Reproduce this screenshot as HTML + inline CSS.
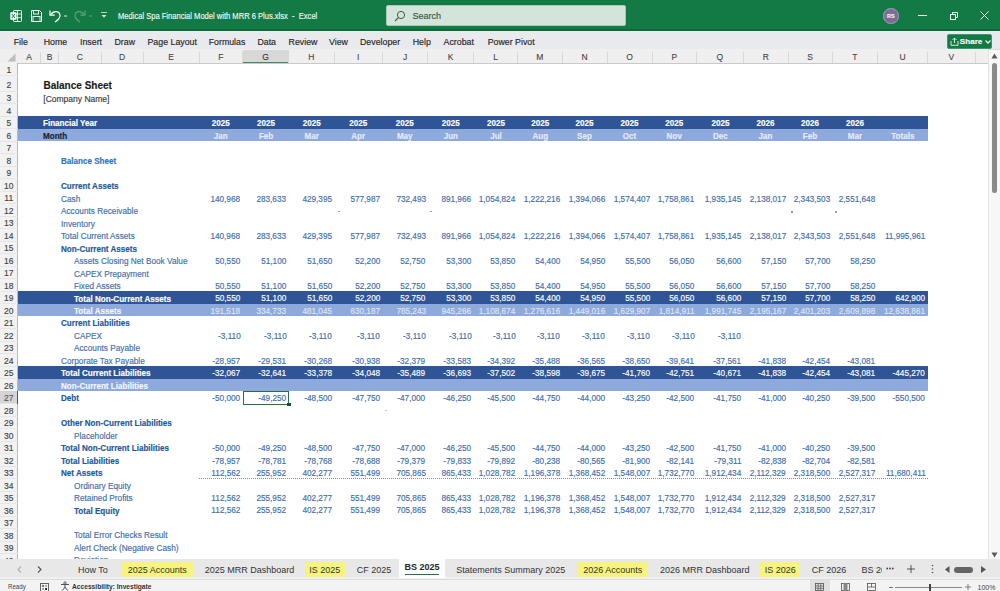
<!DOCTYPE html>
<html><head><meta charset="utf-8">
<style>
*{margin:0;padding:0;box-sizing:border-box}
html,body{width:1000px;height:591px;overflow:hidden;background:#fff;font-family:"Liberation Sans",sans-serif}
.abs{position:absolute}
.t{position:absolute;white-space:nowrap;-webkit-text-stroke:0.15px currentColor}
.b{position:absolute}
#title{position:absolute;left:0;top:0;width:1000px;height:31px;background:#147a45;border-bottom:2px solid #0e6b39}
#ribbon{position:absolute;left:0;top:31px;width:1000px;height:18.5px;background:#e9eaee;border-bottom:1px solid #dcdcdc}
.rt{position:absolute;top:35.7px;font-size:8.8px;color:#262626;line-height:12px;white-space:nowrap;-webkit-text-stroke:0.15px currentColor}
#colhdr{position:absolute;left:0;top:49px;width:988px;height:14.5px;background:#efefef;border-bottom:1px solid #c9c9c9}
.ch{position:absolute;top:50px;height:13px;font-size:8.5px;text-align:center;line-height:15px;-webkit-text-stroke:0.1px currentColor}
.cs{position:absolute;top:52px;height:11px;width:1px;background:#d8d8d8}
.rh{position:absolute;left:0;width:17.5px;font-size:8.5px;text-align:center;-webkit-text-stroke:0.15px currentColor}
.rs{position:absolute;left:0;width:17.5px;height:1px;background:#e6e6e6}
#rowhdr{position:absolute;left:0;top:63px;width:17.5px;height:496px;background:#f2f2f2;border-right:1px solid #b8b8b8}
#vscroll{position:absolute;left:988px;top:50px;width:12px;height:509px;background:#f7f7f7;border-left:1px solid #e3e3e3}
#tabbar{position:absolute;left:0;top:559px;width:1000px;height:20px;background:#e8e8e8;border-bottom:2px solid #f0f0f0}
.tab{position:absolute;top:560.5px;height:18px;font-size:9px;line-height:18px;color:#333;white-space:nowrap}
.ytab{background:#f6f47f;top:562px;height:14.5px;line-height:16.5px}
#status{position:absolute;left:0;top:579px;width:1000px;height:12px;background:#f3f3f3;border-top:1px solid #dcdcdc}
.st{position:absolute;font-size:7.5px;line-height:10px;color:#444;white-space:nowrap}
</style></head><body>
<div id="title"></div>
<!-- Excel icon -->
<svg class="abs" style="left:10px;top:9.5px" width="12" height="12" viewBox="0 0 12 12">
 <rect x="3.5" y="0.5" width="8" height="11" rx="0.8" fill="none" stroke="#fff" stroke-width="1"/>
 <line x1="7.5" y1="1" x2="7.5" y2="11" stroke="#fff" stroke-width="0.8"/>
 <line x1="4" y1="4" x2="11" y2="4" stroke="#fff" stroke-width="0.8"/>
 <line x1="4" y1="7.7" x2="11" y2="7.7" stroke="#fff" stroke-width="0.8"/>
 <rect x="0.3" y="2.3" width="6.2" height="7.4" rx="0.6" fill="#fff"/>
 <path d="M1.9 4 L4.9 8 M4.9 4 L1.9 8" stroke="#147a45" stroke-width="1"/>
</svg>
<!-- save icon -->
<svg class="abs" style="left:31px;top:9.5px" width="11" height="12" viewBox="0 0 11 12">
 <path d="M0.5 0.5 H8.5 L10.5 2.5 V11.5 H0.5 Z" fill="none" stroke="#fff" stroke-width="1"/>
 <rect x="2.5" y="0.5" width="5" height="3.5" fill="none" stroke="#fff" stroke-width="0.9"/>
 <rect x="2" y="6.5" width="7" height="5" fill="none" stroke="#fff" stroke-width="0.9"/>
</svg>
<!-- undo -->
<svg class="abs" style="left:49px;top:9px" width="22" height="14" viewBox="0 0 22 14">
 <path d="M2 5.5 C4 2 10 1 11 6 C11.5 9 9 11 6 13" fill="none" stroke="#fff" stroke-width="1.2"/>
 <path d="M1 1.5 V6.2 H5.7" fill="none" stroke="#fff" stroke-width="1.2"/>
 <line x1="15" y1="7" x2="18" y2="7" stroke="#e0efe6" stroke-width="1"/>
</svg>
<!-- redo faded -->
<svg class="abs" style="left:73px;top:9px" width="22" height="14" viewBox="0 0 22 14">
 <path d="M11 5.5 C9 2 3 1 2 6 C1.5 9 4 11 7 13" fill="none" stroke="#5aa37c" stroke-width="1.2"/>
 <path d="M12 1.5 V6.2 H7.3" fill="none" stroke="#5aa37c" stroke-width="1.2"/>
 <line x1="16" y1="7" x2="19" y2="7" stroke="#5aa37c" stroke-width="1"/>
</svg>
<svg class="abs" style="left:100px;top:11px" width="8" height="8" viewBox="0 0 8 8">
 <line x1="1" y1="1.5" x2="7" y2="1.5" stroke="#cfe6d8" stroke-width="0.9"/>
 <path d="M1.5 4 L4 6.8 L6.5 4 Z" fill="#cfe6d8"/>
</svg>
<div class="t" style="left:117.5px;top:10px;font-size:8.8px;line-height:12px;color:#f2f8f4;transform:scaleX(0.86);transform-origin:left center">Medical Spa Financial Model with MRR 6 Plus.xlsx&nbsp; -&nbsp; Excel</div>
<!-- search -->
<div class="abs" style="left:386px;top:5px;width:239.5px;height:21px;background:#d3e5da;border:1px solid #a9cbb6;border-radius:2px"></div>
<svg class="abs" style="left:394px;top:9.5px" width="12" height="12" viewBox="0 0 12 12">
 <circle cx="7" cy="5" r="3.6" fill="none" stroke="#3d5d49" stroke-width="1"/>
 <line x1="4.4" y1="7.6" x2="1" y2="11" stroke="#3d5d49" stroke-width="1.1"/>
</svg>
<div class="t" style="left:412.5px;top:9.5px;font-size:9px;line-height:12px;color:#3a5444">Search</div>
<!-- avatar -->
<div class="abs" style="left:883px;top:8px;width:15.5px;height:15.5px;border-radius:50%;background:#7b6e96;border:1.2px solid #a59bb8"></div>
<div class="t" style="left:883px;top:11px;width:15.5px;text-align:center;font-size:5.5px;line-height:10px;color:#f0eef5;font-weight:bold">RS</div>
<!-- window controls -->
<div class="abs" style="left:918px;top:15px;width:9px;height:1px;background:#e8f3ec"></div>
<svg class="abs" style="left:950px;top:11.5px" width="8" height="8" viewBox="0 0 8 8">
 <rect x="0.5" y="2.5" width="5" height="5" fill="none" stroke="#e8f3ec" stroke-width="1"/>
 <path d="M2.5 2.5 V0.5 H7.5 V5.5 H5.5" fill="none" stroke="#e8f3ec" stroke-width="1"/>
</svg>
<svg class="abs" style="left:980px;top:11px" width="9" height="9" viewBox="0 0 9 9">
 <path d="M0.5 0.5 L8.5 8.5 M8.5 0.5 L0.5 8.5" stroke="#e8f3ec" stroke-width="1"/>
</svg>

<div id="ribbon"></div>
<div class="rt" style="left:13.7px">File</div>
<div class="rt" style="left:43.7px">Home</div>
<div class="rt" style="left:80px">Insert</div>
<div class="rt" style="left:114.5px">Draw</div>
<div class="rt" style="left:147.5px">Page Layout</div>
<div class="rt" style="left:208.7px">Formulas</div>
<div class="rt" style="left:257.4px">Data</div>
<div class="rt" style="left:288.6px">Review</div>
<div class="rt" style="left:329px">View</div>
<div class="rt" style="left:360px">Developer</div>
<div class="rt" style="left:412.7px">Help</div>
<div class="rt" style="left:443.6px">Acrobat</div>
<div class="rt" style="left:487.7px">Power Pivot</div>
<!-- share -->
<div class="abs" style="left:946.5px;top:33.5px;width:45.7px;height:15px;background:#137a45;border-radius:2px;border:1px solid #3d9a68"></div>
<svg class="abs" style="left:949.5px;top:36.5px" width="9" height="9" viewBox="0 0 9 9">
 <path d="M1 4 V8.3 H8 V4" fill="none" stroke="#e6f2ea" stroke-width="0.9"/>
 <path d="M4.5 6 V1 M2.5 3 L4.5 1 L6.5 3" fill="none" stroke="#e6f2ea" stroke-width="0.9"/>
</svg>
<div class="t" style="left:959.8px;top:36px;font-size:8.1px;line-height:11px;color:#f4fbf6;font-weight:bold">Share</div>
<svg class="abs" style="left:984.5px;top:39.5px" width="6" height="4" viewBox="0 0 6 4"><path d="M0.5 0.5 L3 3 L5.5 0.5" fill="none" stroke="#e6f2ea" stroke-width="1.3"/></svg>

<div id="colhdr"></div>
<div class="ch" style="left:17.5px;width:23.0px;color:#444"><span>A</span></div>
<div class="cs" style="left:40.0px"></div>
<div class="ch" style="left:40.5px;width:18.0px;color:#444"><span>B</span></div>
<div class="cs" style="left:58.0px"></div>
<div class="ch" style="left:58.5px;width:42.5px;color:#444"><span>C</span></div>
<div class="cs" style="left:100.5px"></div>
<div class="ch" style="left:101px;width:42px;color:#444"><span>D</span></div>
<div class="cs" style="left:142.5px"></div>
<div class="ch" style="left:143px;width:56px;color:#444"><span>E</span></div>
<div class="cs" style="left:198.5px"></div>
<div class="ch" style="left:199px;width:43.5px;color:#444"><span>F</span></div>
<div class="cs" style="left:242.0px"></div>
<div class="ch" style="left:242.5px;width:46.19999999999999px;background:#d8d8d8;border-bottom:1.5px solid #3b8a5c;color:#333"><span>G</span></div>
<div class="cs" style="left:288.2px"></div>
<div class="ch" style="left:288.7px;width:45.30000000000001px;color:#444"><span>H</span></div>
<div class="cs" style="left:333.5px"></div>
<div class="ch" style="left:334px;width:48.30000000000001px;color:#444"><span>I</span></div>
<div class="cs" style="left:381.8px"></div>
<div class="ch" style="left:382.3px;width:45.5px;color:#444"><span>J</span></div>
<div class="cs" style="left:427.3px"></div>
<div class="ch" style="left:427.8px;width:45.69999999999999px;color:#444"><span>K</span></div>
<div class="cs" style="left:473.0px"></div>
<div class="ch" style="left:473.5px;width:44.0px;color:#444"><span>L</span></div>
<div class="cs" style="left:517.0px"></div>
<div class="ch" style="left:517.5px;width:44.5px;color:#444"><span>M</span></div>
<div class="cs" style="left:561.5px"></div>
<div class="ch" style="left:562px;width:45px;color:#444"><span>N</span></div>
<div class="cs" style="left:606.5px"></div>
<div class="ch" style="left:607px;width:45px;color:#444"><span>O</span></div>
<div class="cs" style="left:651.5px"></div>
<div class="ch" style="left:652px;width:44.5px;color:#444"><span>P</span></div>
<div class="cs" style="left:696.0px"></div>
<div class="ch" style="left:696.5px;width:46.799999999999955px;color:#444"><span>Q</span></div>
<div class="cs" style="left:742.8px"></div>
<div class="ch" style="left:743.3px;width:44.90000000000009px;color:#444"><span>R</span></div>
<div class="cs" style="left:787.7px"></div>
<div class="ch" style="left:788.2px;width:43.799999999999955px;color:#444"><span>S</span></div>
<div class="cs" style="left:831.5px"></div>
<div class="ch" style="left:832px;width:45.799999999999955px;color:#444"><span>T</span></div>
<div class="cs" style="left:877.3px"></div>
<div class="ch" style="left:877.8px;width:49.700000000000045px;color:#444"><span>U</span></div>
<div class="cs" style="left:927.0px"></div>
<div class="ch" style="left:927.5px;width:47.5px;color:#444"><span>V</span></div>
<div class="cs" style="left:974.5px"></div>
<div id="rowhdr"></div>
<svg class="abs" style="left:6px;top:53px" width="10" height="9" viewBox="0 0 10 9"><path d="M9.5 0.5 V8.5 H1.5 Z" fill="#bdbdbd"/></svg>
<div class="rh" style="top:63px;height:12.5px;line-height:15.1px;color:#444">1</div>
<div class="rs" style="top:75.0px"></div>
<div class="rh" style="top:75.5px;height:15.5px;line-height:18.1px;color:#444">2</div>
<div class="rs" style="top:90.5px"></div>
<div class="rh" style="top:91px;height:12.5px;line-height:15.1px;color:#444">3</div>
<div class="rs" style="top:103.0px"></div>
<div class="rh" style="top:103.5px;height:12.5px;line-height:15.1px;color:#444">4</div>
<div class="rs" style="top:115.5px"></div>
<div class="rh" style="top:116.0px;height:12.5px;line-height:15.1px;color:#444">5</div>
<div class="rs" style="top:128.0px"></div>
<div class="rh" style="top:128.5px;height:12.5px;line-height:15.1px;color:#444">6</div>
<div class="rs" style="top:140.5px"></div>
<div class="rh" style="top:141.0px;height:12.5px;line-height:15.1px;color:#444">7</div>
<div class="rs" style="top:153.0px"></div>
<div class="rh" style="top:153.5px;height:12.5px;line-height:15.1px;color:#444">8</div>
<div class="rs" style="top:165.5px"></div>
<div class="rh" style="top:166.0px;height:12.5px;line-height:15.1px;color:#444">9</div>
<div class="rs" style="top:178.0px"></div>
<div class="rh" style="top:178.5px;height:12.5px;line-height:15.1px;color:#444">10</div>
<div class="rs" style="top:190.5px"></div>
<div class="rh" style="top:191.0px;height:12.5px;line-height:15.1px;color:#444">11</div>
<div class="rs" style="top:203.0px"></div>
<div class="rh" style="top:203.5px;height:12.5px;line-height:15.1px;color:#444">12</div>
<div class="rs" style="top:215.5px"></div>
<div class="rh" style="top:216.0px;height:12.5px;line-height:15.1px;color:#444">13</div>
<div class="rs" style="top:228.0px"></div>
<div class="rh" style="top:228.5px;height:12.5px;line-height:15.1px;color:#444">14</div>
<div class="rs" style="top:240.5px"></div>
<div class="rh" style="top:241.0px;height:12.5px;line-height:15.1px;color:#444">15</div>
<div class="rs" style="top:253.0px"></div>
<div class="rh" style="top:253.5px;height:12.5px;line-height:15.1px;color:#444">16</div>
<div class="rs" style="top:265.5px"></div>
<div class="rh" style="top:266.0px;height:12.5px;line-height:15.1px;color:#444">17</div>
<div class="rs" style="top:278.0px"></div>
<div class="rh" style="top:278.5px;height:12.5px;line-height:15.1px;color:#444">18</div>
<div class="rs" style="top:290.5px"></div>
<div class="rh" style="top:291.0px;height:12.5px;line-height:15.1px;color:#444">19</div>
<div class="rs" style="top:303.0px"></div>
<div class="rh" style="top:303.5px;height:12.5px;line-height:15.1px;color:#444">20</div>
<div class="rs" style="top:315.5px"></div>
<div class="rh" style="top:316.0px;height:12.5px;line-height:15.1px;color:#444">21</div>
<div class="rs" style="top:328.0px"></div>
<div class="rh" style="top:328.5px;height:12.5px;line-height:15.1px;color:#444">22</div>
<div class="rs" style="top:340.5px"></div>
<div class="rh" style="top:341.0px;height:12.5px;line-height:15.1px;color:#444">23</div>
<div class="rs" style="top:353.0px"></div>
<div class="rh" style="top:353.5px;height:12.5px;line-height:15.1px;color:#444">24</div>
<div class="rs" style="top:365.5px"></div>
<div class="rh" style="top:366.0px;height:12.5px;line-height:15.1px;color:#444">25</div>
<div class="rs" style="top:378.0px"></div>
<div class="rh" style="top:378.5px;height:12.5px;line-height:15.1px;color:#444">26</div>
<div class="rs" style="top:390.5px"></div>
<div class="rh" style="top:391.0px;height:12.5px;line-height:15.1px;background:#d4d4d4;color:#555">27</div>
<div class="rs" style="top:403.0px"></div>
<div class="b" style="left:16.5px;top:391.0px;width:1.5px;height:12.5px;background:#217346"></div>
<div class="rh" style="top:403.5px;height:12.5px;line-height:15.1px;color:#444">28</div>
<div class="rs" style="top:415.5px"></div>
<div class="rh" style="top:416.0px;height:12.5px;line-height:15.1px;color:#444">29</div>
<div class="rs" style="top:428.0px"></div>
<div class="rh" style="top:428.5px;height:12.5px;line-height:15.1px;color:#444">30</div>
<div class="rs" style="top:440.5px"></div>
<div class="rh" style="top:441.0px;height:12.5px;line-height:15.1px;color:#444">31</div>
<div class="rs" style="top:453.0px"></div>
<div class="rh" style="top:453.5px;height:12.5px;line-height:15.1px;color:#444">32</div>
<div class="rs" style="top:465.5px"></div>
<div class="rh" style="top:466.0px;height:12.5px;line-height:15.1px;color:#444">33</div>
<div class="rs" style="top:478.0px"></div>
<div class="rh" style="top:478.5px;height:12.5px;line-height:15.1px;color:#444">34</div>
<div class="rs" style="top:490.5px"></div>
<div class="rh" style="top:491.0px;height:12.5px;line-height:15.1px;color:#444">35</div>
<div class="rs" style="top:503.0px"></div>
<div class="rh" style="top:503.5px;height:12.5px;line-height:15.1px;color:#444">36</div>
<div class="rs" style="top:515.5px"></div>
<div class="rh" style="top:516.0px;height:12.5px;line-height:15.1px;color:#444">37</div>
<div class="rs" style="top:528.0px"></div>
<div class="rh" style="top:528.5px;height:12.5px;line-height:15.1px;color:#444">38</div>
<div class="rs" style="top:540.5px"></div>
<div class="rh" style="top:541.0px;height:12.5px;line-height:15.1px;color:#444">39</div>
<div class="rs" style="top:553.0px"></div>
<div class="rh" style="top:553.5px;height:12.5px;line-height:15.1px;color:#444">40</div>
<div class="rs" style="top:565.5px"></div>

<div class="b" style="left:17.5px;width:910px;top:116.0px;height:12.5px;background:#2f5597"></div>
<div class="b" style="left:17.5px;width:910px;top:291.0px;height:12.5px;background:#2f5597"></div>
<div class="b" style="left:17.5px;width:910px;top:366.0px;height:12.5px;background:#2f5597"></div>
<div class="b" style="left:17.5px;width:910px;top:128.5px;height:12.5px;background:#8ea9db"></div>
<div class="b" style="left:17.5px;width:910px;top:303.5px;height:12.5px;background:#8ea9db"></div>
<div class="b" style="left:17.5px;width:910px;top:378.5px;height:12.5px;background:#8ea9db"></div>
<div class="t" style="top:79.83px;font-size:10px;line-height:12.00px;color:#1b1b1b;font-weight:bold;left:43.50px;">Balance Sheet</div>
<div class="t" style="top:93.75px;font-size:8.5px;line-height:10.20px;color:#3a3a3a;left:43.30px;">[Company Name]</div>
<div class="t" style="top:118.13px;font-size:8.5px;line-height:10.20px;color:#ffffff;font-weight:bold;transform:scaleX(0.95);transform-origin:left center;left:43.30px;">Financial Year</div>
<div class="t" style="top:131.40px;font-size:8.5px;line-height:10.20px;color:#1a1f33;font-weight:bold;transform:scaleX(0.95);transform-origin:left center;left:43.30px;">Month</div>
<div class="t" style="top:118.13px;font-size:8.5px;line-height:10.20px;color:#ffffff;font-weight:bold;transform:scaleX(0.95);transform-origin:center center;left:199.00px;width:43.50px;text-align:center;">2025</div>
<div class="t" style="top:118.13px;font-size:8.5px;line-height:10.20px;color:#ffffff;font-weight:bold;transform:scaleX(0.95);transform-origin:center center;left:242.50px;width:46.20px;text-align:center;">2025</div>
<div class="t" style="top:118.13px;font-size:8.5px;line-height:10.20px;color:#ffffff;font-weight:bold;transform:scaleX(0.95);transform-origin:center center;left:288.70px;width:45.30px;text-align:center;">2025</div>
<div class="t" style="top:118.13px;font-size:8.5px;line-height:10.20px;color:#ffffff;font-weight:bold;transform:scaleX(0.95);transform-origin:center center;left:334.00px;width:48.30px;text-align:center;">2025</div>
<div class="t" style="top:118.13px;font-size:8.5px;line-height:10.20px;color:#ffffff;font-weight:bold;transform:scaleX(0.95);transform-origin:center center;left:382.30px;width:45.50px;text-align:center;">2025</div>
<div class="t" style="top:118.13px;font-size:8.5px;line-height:10.20px;color:#ffffff;font-weight:bold;transform:scaleX(0.95);transform-origin:center center;left:427.80px;width:45.70px;text-align:center;">2025</div>
<div class="t" style="top:118.13px;font-size:8.5px;line-height:10.20px;color:#ffffff;font-weight:bold;transform:scaleX(0.95);transform-origin:center center;left:473.50px;width:44.00px;text-align:center;">2025</div>
<div class="t" style="top:118.13px;font-size:8.5px;line-height:10.20px;color:#ffffff;font-weight:bold;transform:scaleX(0.95);transform-origin:center center;left:517.50px;width:44.50px;text-align:center;">2025</div>
<div class="t" style="top:118.13px;font-size:8.5px;line-height:10.20px;color:#ffffff;font-weight:bold;transform:scaleX(0.95);transform-origin:center center;left:562.00px;width:45.00px;text-align:center;">2025</div>
<div class="t" style="top:118.13px;font-size:8.5px;line-height:10.20px;color:#ffffff;font-weight:bold;transform:scaleX(0.95);transform-origin:center center;left:607.00px;width:45.00px;text-align:center;">2025</div>
<div class="t" style="top:118.13px;font-size:8.5px;line-height:10.20px;color:#ffffff;font-weight:bold;transform:scaleX(0.95);transform-origin:center center;left:652.00px;width:44.50px;text-align:center;">2025</div>
<div class="t" style="top:118.13px;font-size:8.5px;line-height:10.20px;color:#ffffff;font-weight:bold;transform:scaleX(0.95);transform-origin:center center;left:696.50px;width:46.80px;text-align:center;">2025</div>
<div class="t" style="top:118.13px;font-size:8.5px;line-height:10.20px;color:#ffffff;font-weight:bold;transform:scaleX(0.95);transform-origin:center center;left:743.30px;width:44.90px;text-align:center;">2026</div>
<div class="t" style="top:118.13px;font-size:8.5px;line-height:10.20px;color:#ffffff;font-weight:bold;transform:scaleX(0.95);transform-origin:center center;left:788.20px;width:43.80px;text-align:center;">2026</div>
<div class="t" style="top:118.13px;font-size:8.5px;line-height:10.20px;color:#ffffff;font-weight:bold;transform:scaleX(0.95);transform-origin:center center;left:832.00px;width:45.80px;text-align:center;">2026</div>
<div class="t" style="top:131.40px;font-size:8.5px;line-height:10.20px;color:#e4ecf8;font-weight:bold;transform:scaleX(0.95);transform-origin:center center;left:199.00px;width:43.50px;text-align:center;">Jan</div>
<div class="t" style="top:131.40px;font-size:8.5px;line-height:10.20px;color:#e4ecf8;font-weight:bold;transform:scaleX(0.95);transform-origin:center center;left:242.50px;width:46.20px;text-align:center;">Feb</div>
<div class="t" style="top:131.40px;font-size:8.5px;line-height:10.20px;color:#e4ecf8;font-weight:bold;transform:scaleX(0.95);transform-origin:center center;left:288.70px;width:45.30px;text-align:center;">Mar</div>
<div class="t" style="top:131.40px;font-size:8.5px;line-height:10.20px;color:#e4ecf8;font-weight:bold;transform:scaleX(0.95);transform-origin:center center;left:334.00px;width:48.30px;text-align:center;">Apr</div>
<div class="t" style="top:131.40px;font-size:8.5px;line-height:10.20px;color:#e4ecf8;font-weight:bold;transform:scaleX(0.95);transform-origin:center center;left:382.30px;width:45.50px;text-align:center;">May</div>
<div class="t" style="top:131.40px;font-size:8.5px;line-height:10.20px;color:#e4ecf8;font-weight:bold;transform:scaleX(0.95);transform-origin:center center;left:427.80px;width:45.70px;text-align:center;">Jun</div>
<div class="t" style="top:131.40px;font-size:8.5px;line-height:10.20px;color:#e4ecf8;font-weight:bold;transform:scaleX(0.95);transform-origin:center center;left:473.50px;width:44.00px;text-align:center;">Jul</div>
<div class="t" style="top:131.40px;font-size:8.5px;line-height:10.20px;color:#e4ecf8;font-weight:bold;transform:scaleX(0.95);transform-origin:center center;left:517.50px;width:44.50px;text-align:center;">Aug</div>
<div class="t" style="top:131.40px;font-size:8.5px;line-height:10.20px;color:#e4ecf8;font-weight:bold;transform:scaleX(0.95);transform-origin:center center;left:562.00px;width:45.00px;text-align:center;">Sep</div>
<div class="t" style="top:131.40px;font-size:8.5px;line-height:10.20px;color:#e4ecf8;font-weight:bold;transform:scaleX(0.95);transform-origin:center center;left:607.00px;width:45.00px;text-align:center;">Oct</div>
<div class="t" style="top:131.40px;font-size:8.5px;line-height:10.20px;color:#e4ecf8;font-weight:bold;transform:scaleX(0.95);transform-origin:center center;left:652.00px;width:44.50px;text-align:center;">Nov</div>
<div class="t" style="top:131.40px;font-size:8.5px;line-height:10.20px;color:#e4ecf8;font-weight:bold;transform:scaleX(0.95);transform-origin:center center;left:696.50px;width:46.80px;text-align:center;">Dec</div>
<div class="t" style="top:131.40px;font-size:8.5px;line-height:10.20px;color:#e4ecf8;font-weight:bold;transform:scaleX(0.95);transform-origin:center center;left:743.30px;width:44.90px;text-align:center;">Jan</div>
<div class="t" style="top:131.40px;font-size:8.5px;line-height:10.20px;color:#e4ecf8;font-weight:bold;transform:scaleX(0.95);transform-origin:center center;left:788.20px;width:43.80px;text-align:center;">Feb</div>
<div class="t" style="top:131.40px;font-size:8.5px;line-height:10.20px;color:#e4ecf8;font-weight:bold;transform:scaleX(0.95);transform-origin:center center;left:832.00px;width:45.80px;text-align:center;">Mar</div>
<div class="t" style="top:131.40px;font-size:8.5px;line-height:10.20px;color:#e4ecf8;font-weight:bold;transform:scaleX(0.95);transform-origin:center center;left:877.80px;width:49.70px;text-align:center;">Totals</div>
<div class="t" style="top:156.34px;font-size:8.5px;line-height:10.20px;color:#2e74c0;font-weight:bold;transform:scaleX(0.95);transform-origin:left center;left:61.20px;">Balance Sheet</div>
<div class="t" style="top:181.28px;font-size:8.5px;line-height:10.20px;color:#22589a;font-weight:bold;transform:scaleX(0.95);transform-origin:left center;left:61.20px;">Current Assets</div>
<div class="t" style="top:193.75px;font-size:8.5px;line-height:10.20px;color:#3d6eab;transform:scaleX(0.97);transform-origin:left center;left:61.20px;">Cash</div>
<div class="t" style="top:193.66px;font-size:8.6px;line-height:10.32px;color:#3d6eab;transform:scaleX(0.955);transform-origin:right center;right:759.70px;text-align:right;">140,968</div>
<div class="t" style="top:193.66px;font-size:8.6px;line-height:10.32px;color:#3d6eab;transform:scaleX(0.955);transform-origin:right center;right:713.50px;text-align:right;">283,633</div>
<div class="t" style="top:193.66px;font-size:8.6px;line-height:10.32px;color:#3d6eab;transform:scaleX(0.955);transform-origin:right center;right:668.20px;text-align:right;">429,395</div>
<div class="t" style="top:193.66px;font-size:8.6px;line-height:10.32px;color:#3d6eab;transform:scaleX(0.955);transform-origin:right center;right:619.90px;text-align:right;">577,987</div>
<div class="t" style="top:193.66px;font-size:8.6px;line-height:10.32px;color:#3d6eab;transform:scaleX(0.955);transform-origin:right center;right:574.40px;text-align:right;">732,493</div>
<div class="t" style="top:193.66px;font-size:8.6px;line-height:10.32px;color:#3d6eab;transform:scaleX(0.955);transform-origin:right center;right:528.70px;text-align:right;">891,966</div>
<div class="t" style="top:193.66px;font-size:8.6px;line-height:10.32px;color:#3d6eab;transform:scaleX(0.955);transform-origin:right center;right:484.70px;text-align:right;">1,054,824</div>
<div class="t" style="top:193.66px;font-size:8.6px;line-height:10.32px;color:#3d6eab;transform:scaleX(0.955);transform-origin:right center;right:440.20px;text-align:right;">1,222,216</div>
<div class="t" style="top:193.66px;font-size:8.6px;line-height:10.32px;color:#3d6eab;transform:scaleX(0.955);transform-origin:right center;right:395.20px;text-align:right;">1,394,066</div>
<div class="t" style="top:193.66px;font-size:8.6px;line-height:10.32px;color:#3d6eab;transform:scaleX(0.955);transform-origin:right center;right:350.20px;text-align:right;">1,574,407</div>
<div class="t" style="top:193.66px;font-size:8.6px;line-height:10.32px;color:#3d6eab;transform:scaleX(0.955);transform-origin:right center;right:305.70px;text-align:right;">1,758,861</div>
<div class="t" style="top:193.66px;font-size:8.6px;line-height:10.32px;color:#3d6eab;transform:scaleX(0.955);transform-origin:right center;right:258.90px;text-align:right;">1,935,145</div>
<div class="t" style="top:193.66px;font-size:8.6px;line-height:10.32px;color:#3d6eab;transform:scaleX(0.955);transform-origin:right center;right:214.00px;text-align:right;">2,138,017</div>
<div class="t" style="top:193.66px;font-size:8.6px;line-height:10.32px;color:#3d6eab;transform:scaleX(0.955);transform-origin:right center;right:170.20px;text-align:right;">2,343,503</div>
<div class="t" style="top:193.66px;font-size:8.6px;line-height:10.32px;color:#3d6eab;transform:scaleX(0.955);transform-origin:right center;right:124.40px;text-align:right;">2,551,648</div>
<div class="t" style="top:206.22px;font-size:8.5px;line-height:10.20px;color:#3d6eab;transform:scaleX(0.97);transform-origin:left center;left:61.20px;">Accounts Receivable</div>
<div class="t" style="top:218.69px;font-size:8.5px;line-height:10.20px;color:#3d6eab;transform:scaleX(0.97);transform-origin:left center;left:61.20px;">Inventory</div>
<div class="t" style="top:231.16px;font-size:8.5px;line-height:10.20px;color:#3d6eab;transform:scaleX(0.97);transform-origin:left center;left:61.20px;">Total Current Assets</div>
<div class="t" style="top:231.07px;font-size:8.6px;line-height:10.32px;color:#3d6eab;transform:scaleX(0.955);transform-origin:right center;right:759.70px;text-align:right;">140,968</div>
<div class="t" style="top:231.07px;font-size:8.6px;line-height:10.32px;color:#3d6eab;transform:scaleX(0.955);transform-origin:right center;right:713.50px;text-align:right;">283,633</div>
<div class="t" style="top:231.07px;font-size:8.6px;line-height:10.32px;color:#3d6eab;transform:scaleX(0.955);transform-origin:right center;right:668.20px;text-align:right;">429,395</div>
<div class="t" style="top:231.07px;font-size:8.6px;line-height:10.32px;color:#3d6eab;transform:scaleX(0.955);transform-origin:right center;right:619.90px;text-align:right;">577,987</div>
<div class="t" style="top:231.07px;font-size:8.6px;line-height:10.32px;color:#3d6eab;transform:scaleX(0.955);transform-origin:right center;right:574.40px;text-align:right;">732,493</div>
<div class="t" style="top:231.07px;font-size:8.6px;line-height:10.32px;color:#3d6eab;transform:scaleX(0.955);transform-origin:right center;right:528.70px;text-align:right;">891,966</div>
<div class="t" style="top:231.07px;font-size:8.6px;line-height:10.32px;color:#3d6eab;transform:scaleX(0.955);transform-origin:right center;right:484.70px;text-align:right;">1,054,824</div>
<div class="t" style="top:231.07px;font-size:8.6px;line-height:10.32px;color:#3d6eab;transform:scaleX(0.955);transform-origin:right center;right:440.20px;text-align:right;">1,222,216</div>
<div class="t" style="top:231.07px;font-size:8.6px;line-height:10.32px;color:#3d6eab;transform:scaleX(0.955);transform-origin:right center;right:395.20px;text-align:right;">1,394,066</div>
<div class="t" style="top:231.07px;font-size:8.6px;line-height:10.32px;color:#3d6eab;transform:scaleX(0.955);transform-origin:right center;right:350.20px;text-align:right;">1,574,407</div>
<div class="t" style="top:231.07px;font-size:8.6px;line-height:10.32px;color:#3d6eab;transform:scaleX(0.955);transform-origin:right center;right:305.70px;text-align:right;">1,758,861</div>
<div class="t" style="top:231.07px;font-size:8.6px;line-height:10.32px;color:#3d6eab;transform:scaleX(0.955);transform-origin:right center;right:258.90px;text-align:right;">1,935,145</div>
<div class="t" style="top:231.07px;font-size:8.6px;line-height:10.32px;color:#3d6eab;transform:scaleX(0.955);transform-origin:right center;right:214.00px;text-align:right;">2,138,017</div>
<div class="t" style="top:231.07px;font-size:8.6px;line-height:10.32px;color:#3d6eab;transform:scaleX(0.955);transform-origin:right center;right:170.20px;text-align:right;">2,343,503</div>
<div class="t" style="top:231.07px;font-size:8.6px;line-height:10.32px;color:#3d6eab;transform:scaleX(0.955);transform-origin:right center;right:124.40px;text-align:right;">2,551,648</div>
<div class="t" style="top:231.07px;font-size:8.6px;line-height:10.32px;color:#3d6eab;transform:scaleX(0.955);transform-origin:right center;right:74.70px;text-align:right;">11,995,961</div>
<div class="t" style="top:243.63px;font-size:8.5px;line-height:10.20px;color:#22589a;font-weight:bold;transform:scaleX(0.95);transform-origin:left center;left:61.20px;">Non-Current Assets</div>
<div class="t" style="top:256.10px;font-size:8.5px;line-height:10.20px;color:#3d6eab;transform:scaleX(0.97);transform-origin:left center;left:73.50px;">Assets Closing Net Book Value</div>
<div class="t" style="top:256.01px;font-size:8.6px;line-height:10.32px;color:#3d6eab;transform:scaleX(0.955);transform-origin:right center;right:759.70px;text-align:right;">50,550</div>
<div class="t" style="top:256.01px;font-size:8.6px;line-height:10.32px;color:#3d6eab;transform:scaleX(0.955);transform-origin:right center;right:713.50px;text-align:right;">51,100</div>
<div class="t" style="top:256.01px;font-size:8.6px;line-height:10.32px;color:#3d6eab;transform:scaleX(0.955);transform-origin:right center;right:668.20px;text-align:right;">51,650</div>
<div class="t" style="top:256.01px;font-size:8.6px;line-height:10.32px;color:#3d6eab;transform:scaleX(0.955);transform-origin:right center;right:619.90px;text-align:right;">52,200</div>
<div class="t" style="top:256.01px;font-size:8.6px;line-height:10.32px;color:#3d6eab;transform:scaleX(0.955);transform-origin:right center;right:574.40px;text-align:right;">52,750</div>
<div class="t" style="top:256.01px;font-size:8.6px;line-height:10.32px;color:#3d6eab;transform:scaleX(0.955);transform-origin:right center;right:528.70px;text-align:right;">53,300</div>
<div class="t" style="top:256.01px;font-size:8.6px;line-height:10.32px;color:#3d6eab;transform:scaleX(0.955);transform-origin:right center;right:484.70px;text-align:right;">53,850</div>
<div class="t" style="top:256.01px;font-size:8.6px;line-height:10.32px;color:#3d6eab;transform:scaleX(0.955);transform-origin:right center;right:440.20px;text-align:right;">54,400</div>
<div class="t" style="top:256.01px;font-size:8.6px;line-height:10.32px;color:#3d6eab;transform:scaleX(0.955);transform-origin:right center;right:395.20px;text-align:right;">54,950</div>
<div class="t" style="top:256.01px;font-size:8.6px;line-height:10.32px;color:#3d6eab;transform:scaleX(0.955);transform-origin:right center;right:350.20px;text-align:right;">55,500</div>
<div class="t" style="top:256.01px;font-size:8.6px;line-height:10.32px;color:#3d6eab;transform:scaleX(0.955);transform-origin:right center;right:305.70px;text-align:right;">56,050</div>
<div class="t" style="top:256.01px;font-size:8.6px;line-height:10.32px;color:#3d6eab;transform:scaleX(0.955);transform-origin:right center;right:258.90px;text-align:right;">56,600</div>
<div class="t" style="top:256.01px;font-size:8.6px;line-height:10.32px;color:#3d6eab;transform:scaleX(0.955);transform-origin:right center;right:214.00px;text-align:right;">57,150</div>
<div class="t" style="top:256.01px;font-size:8.6px;line-height:10.32px;color:#3d6eab;transform:scaleX(0.955);transform-origin:right center;right:170.20px;text-align:right;">57,700</div>
<div class="t" style="top:256.01px;font-size:8.6px;line-height:10.32px;color:#3d6eab;transform:scaleX(0.955);transform-origin:right center;right:124.40px;text-align:right;">58,250</div>
<div class="t" style="top:268.57px;font-size:8.5px;line-height:10.20px;color:#3d6eab;transform:scaleX(0.97);transform-origin:left center;left:73.50px;">CAPEX Prepayment</div>
<div class="t" style="top:281.04px;font-size:8.5px;line-height:10.20px;color:#3d6eab;transform:scaleX(0.97);transform-origin:left center;left:73.50px;">Fixed Assets</div>
<div class="t" style="top:280.95px;font-size:8.6px;line-height:10.32px;color:#3d6eab;transform:scaleX(0.955);transform-origin:right center;right:759.70px;text-align:right;">50,550</div>
<div class="t" style="top:280.95px;font-size:8.6px;line-height:10.32px;color:#3d6eab;transform:scaleX(0.955);transform-origin:right center;right:713.50px;text-align:right;">51,100</div>
<div class="t" style="top:280.95px;font-size:8.6px;line-height:10.32px;color:#3d6eab;transform:scaleX(0.955);transform-origin:right center;right:668.20px;text-align:right;">51,650</div>
<div class="t" style="top:280.95px;font-size:8.6px;line-height:10.32px;color:#3d6eab;transform:scaleX(0.955);transform-origin:right center;right:619.90px;text-align:right;">52,200</div>
<div class="t" style="top:280.95px;font-size:8.6px;line-height:10.32px;color:#3d6eab;transform:scaleX(0.955);transform-origin:right center;right:574.40px;text-align:right;">52,750</div>
<div class="t" style="top:280.95px;font-size:8.6px;line-height:10.32px;color:#3d6eab;transform:scaleX(0.955);transform-origin:right center;right:528.70px;text-align:right;">53,300</div>
<div class="t" style="top:280.95px;font-size:8.6px;line-height:10.32px;color:#3d6eab;transform:scaleX(0.955);transform-origin:right center;right:484.70px;text-align:right;">53,850</div>
<div class="t" style="top:280.95px;font-size:8.6px;line-height:10.32px;color:#3d6eab;transform:scaleX(0.955);transform-origin:right center;right:440.20px;text-align:right;">54,400</div>
<div class="t" style="top:280.95px;font-size:8.6px;line-height:10.32px;color:#3d6eab;transform:scaleX(0.955);transform-origin:right center;right:395.20px;text-align:right;">54,950</div>
<div class="t" style="top:280.95px;font-size:8.6px;line-height:10.32px;color:#3d6eab;transform:scaleX(0.955);transform-origin:right center;right:350.20px;text-align:right;">55,500</div>
<div class="t" style="top:280.95px;font-size:8.6px;line-height:10.32px;color:#3d6eab;transform:scaleX(0.955);transform-origin:right center;right:305.70px;text-align:right;">56,050</div>
<div class="t" style="top:280.95px;font-size:8.6px;line-height:10.32px;color:#3d6eab;transform:scaleX(0.955);transform-origin:right center;right:258.90px;text-align:right;">56,600</div>
<div class="t" style="top:280.95px;font-size:8.6px;line-height:10.32px;color:#3d6eab;transform:scaleX(0.955);transform-origin:right center;right:214.00px;text-align:right;">57,150</div>
<div class="t" style="top:280.95px;font-size:8.6px;line-height:10.32px;color:#3d6eab;transform:scaleX(0.955);transform-origin:right center;right:170.20px;text-align:right;">57,700</div>
<div class="t" style="top:280.95px;font-size:8.6px;line-height:10.32px;color:#3d6eab;transform:scaleX(0.955);transform-origin:right center;right:124.40px;text-align:right;">58,250</div>
<div class="t" style="top:293.51px;font-size:8.5px;line-height:10.20px;color:#ffffff;font-weight:bold;transform:scaleX(0.95);transform-origin:left center;left:73.50px;">Total Non-Current Assets</div>
<div class="t" style="top:293.42px;font-size:8.6px;line-height:10.32px;color:#ffffff;transform:scaleX(0.955);transform-origin:right center;right:759.70px;text-align:right;">50,550</div>
<div class="t" style="top:293.42px;font-size:8.6px;line-height:10.32px;color:#ffffff;transform:scaleX(0.955);transform-origin:right center;right:713.50px;text-align:right;">51,100</div>
<div class="t" style="top:293.42px;font-size:8.6px;line-height:10.32px;color:#ffffff;transform:scaleX(0.955);transform-origin:right center;right:668.20px;text-align:right;">51,650</div>
<div class="t" style="top:293.42px;font-size:8.6px;line-height:10.32px;color:#ffffff;transform:scaleX(0.955);transform-origin:right center;right:619.90px;text-align:right;">52,200</div>
<div class="t" style="top:293.42px;font-size:8.6px;line-height:10.32px;color:#ffffff;transform:scaleX(0.955);transform-origin:right center;right:574.40px;text-align:right;">52,750</div>
<div class="t" style="top:293.42px;font-size:8.6px;line-height:10.32px;color:#ffffff;transform:scaleX(0.955);transform-origin:right center;right:528.70px;text-align:right;">53,300</div>
<div class="t" style="top:293.42px;font-size:8.6px;line-height:10.32px;color:#ffffff;transform:scaleX(0.955);transform-origin:right center;right:484.70px;text-align:right;">53,850</div>
<div class="t" style="top:293.42px;font-size:8.6px;line-height:10.32px;color:#ffffff;transform:scaleX(0.955);transform-origin:right center;right:440.20px;text-align:right;">54,400</div>
<div class="t" style="top:293.42px;font-size:8.6px;line-height:10.32px;color:#ffffff;transform:scaleX(0.955);transform-origin:right center;right:395.20px;text-align:right;">54,950</div>
<div class="t" style="top:293.42px;font-size:8.6px;line-height:10.32px;color:#ffffff;transform:scaleX(0.955);transform-origin:right center;right:350.20px;text-align:right;">55,500</div>
<div class="t" style="top:293.42px;font-size:8.6px;line-height:10.32px;color:#ffffff;transform:scaleX(0.955);transform-origin:right center;right:305.70px;text-align:right;">56,050</div>
<div class="t" style="top:293.42px;font-size:8.6px;line-height:10.32px;color:#ffffff;transform:scaleX(0.955);transform-origin:right center;right:258.90px;text-align:right;">56,600</div>
<div class="t" style="top:293.42px;font-size:8.6px;line-height:10.32px;color:#ffffff;transform:scaleX(0.955);transform-origin:right center;right:214.00px;text-align:right;">57,150</div>
<div class="t" style="top:293.42px;font-size:8.6px;line-height:10.32px;color:#ffffff;transform:scaleX(0.955);transform-origin:right center;right:170.20px;text-align:right;">57,700</div>
<div class="t" style="top:293.42px;font-size:8.6px;line-height:10.32px;color:#ffffff;transform:scaleX(0.955);transform-origin:right center;right:124.40px;text-align:right;">58,250</div>
<div class="t" style="top:293.42px;font-size:8.6px;line-height:10.32px;color:#ffffff;transform:scaleX(0.955);transform-origin:right center;right:74.70px;text-align:right;">642,900</div>
<div class="t" style="top:305.98px;font-size:8.5px;line-height:10.20px;color:#f4f7fc;font-weight:bold;transform:scaleX(0.95);transform-origin:left center;left:73.50px;">Total Assets</div>
<div class="t" style="top:305.89px;font-size:8.6px;line-height:10.32px;color:#dfe7f5;transform:scaleX(0.955);transform-origin:right center;right:759.70px;text-align:right;">191,518</div>
<div class="t" style="top:305.89px;font-size:8.6px;line-height:10.32px;color:#dfe7f5;transform:scaleX(0.955);transform-origin:right center;right:713.50px;text-align:right;">334,733</div>
<div class="t" style="top:305.89px;font-size:8.6px;line-height:10.32px;color:#dfe7f5;transform:scaleX(0.955);transform-origin:right center;right:668.20px;text-align:right;">481,045</div>
<div class="t" style="top:305.89px;font-size:8.6px;line-height:10.32px;color:#dfe7f5;transform:scaleX(0.955);transform-origin:right center;right:619.90px;text-align:right;">630,187</div>
<div class="t" style="top:305.89px;font-size:8.6px;line-height:10.32px;color:#dfe7f5;transform:scaleX(0.955);transform-origin:right center;right:574.40px;text-align:right;">785,243</div>
<div class="t" style="top:305.89px;font-size:8.6px;line-height:10.32px;color:#dfe7f5;transform:scaleX(0.955);transform-origin:right center;right:528.70px;text-align:right;">945,266</div>
<div class="t" style="top:305.89px;font-size:8.6px;line-height:10.32px;color:#dfe7f5;transform:scaleX(0.955);transform-origin:right center;right:484.70px;text-align:right;">1,108,674</div>
<div class="t" style="top:305.89px;font-size:8.6px;line-height:10.32px;color:#dfe7f5;transform:scaleX(0.955);transform-origin:right center;right:440.20px;text-align:right;">1,276,616</div>
<div class="t" style="top:305.89px;font-size:8.6px;line-height:10.32px;color:#dfe7f5;transform:scaleX(0.955);transform-origin:right center;right:395.20px;text-align:right;">1,449,016</div>
<div class="t" style="top:305.89px;font-size:8.6px;line-height:10.32px;color:#dfe7f5;transform:scaleX(0.955);transform-origin:right center;right:350.20px;text-align:right;">1,629,907</div>
<div class="t" style="top:305.89px;font-size:8.6px;line-height:10.32px;color:#dfe7f5;transform:scaleX(0.955);transform-origin:right center;right:305.70px;text-align:right;">1,814,911</div>
<div class="t" style="top:305.89px;font-size:8.6px;line-height:10.32px;color:#dfe7f5;transform:scaleX(0.955);transform-origin:right center;right:258.90px;text-align:right;">1,991,745</div>
<div class="t" style="top:305.89px;font-size:8.6px;line-height:10.32px;color:#dfe7f5;transform:scaleX(0.955);transform-origin:right center;right:214.00px;text-align:right;">2,195,167</div>
<div class="t" style="top:305.89px;font-size:8.6px;line-height:10.32px;color:#dfe7f5;transform:scaleX(0.955);transform-origin:right center;right:170.20px;text-align:right;">2,401,203</div>
<div class="t" style="top:305.89px;font-size:8.6px;line-height:10.32px;color:#dfe7f5;transform:scaleX(0.955);transform-origin:right center;right:124.40px;text-align:right;">2,609,898</div>
<div class="t" style="top:305.89px;font-size:8.6px;line-height:10.32px;color:#dfe7f5;transform:scaleX(0.955);transform-origin:right center;right:74.70px;text-align:right;">12,638,861</div>
<div class="t" style="top:318.45px;font-size:8.5px;line-height:10.20px;color:#22589a;font-weight:bold;transform:scaleX(0.95);transform-origin:left center;left:61.20px;">Current Liabilities</div>
<div class="t" style="top:330.92px;font-size:8.5px;line-height:10.20px;color:#3d6eab;transform:scaleX(0.97);transform-origin:left center;left:73.50px;">CAPEX</div>
<div class="t" style="top:330.83px;font-size:8.6px;line-height:10.32px;color:#3d6eab;transform:scaleX(0.955);transform-origin:right center;right:759.70px;text-align:right;">-3,110</div>
<div class="t" style="top:330.83px;font-size:8.6px;line-height:10.32px;color:#3d6eab;transform:scaleX(0.955);transform-origin:right center;right:713.50px;text-align:right;">-3,110</div>
<div class="t" style="top:330.83px;font-size:8.6px;line-height:10.32px;color:#3d6eab;transform:scaleX(0.955);transform-origin:right center;right:668.20px;text-align:right;">-3,110</div>
<div class="t" style="top:330.83px;font-size:8.6px;line-height:10.32px;color:#3d6eab;transform:scaleX(0.955);transform-origin:right center;right:619.90px;text-align:right;">-3,110</div>
<div class="t" style="top:330.83px;font-size:8.6px;line-height:10.32px;color:#3d6eab;transform:scaleX(0.955);transform-origin:right center;right:574.40px;text-align:right;">-3,110</div>
<div class="t" style="top:330.83px;font-size:8.6px;line-height:10.32px;color:#3d6eab;transform:scaleX(0.955);transform-origin:right center;right:528.70px;text-align:right;">-3,110</div>
<div class="t" style="top:330.83px;font-size:8.6px;line-height:10.32px;color:#3d6eab;transform:scaleX(0.955);transform-origin:right center;right:484.70px;text-align:right;">-3,110</div>
<div class="t" style="top:330.83px;font-size:8.6px;line-height:10.32px;color:#3d6eab;transform:scaleX(0.955);transform-origin:right center;right:440.20px;text-align:right;">-3,110</div>
<div class="t" style="top:330.83px;font-size:8.6px;line-height:10.32px;color:#3d6eab;transform:scaleX(0.955);transform-origin:right center;right:395.20px;text-align:right;">-3,110</div>
<div class="t" style="top:330.83px;font-size:8.6px;line-height:10.32px;color:#3d6eab;transform:scaleX(0.955);transform-origin:right center;right:350.20px;text-align:right;">-3,110</div>
<div class="t" style="top:330.83px;font-size:8.6px;line-height:10.32px;color:#3d6eab;transform:scaleX(0.955);transform-origin:right center;right:305.70px;text-align:right;">-3,110</div>
<div class="t" style="top:330.83px;font-size:8.6px;line-height:10.32px;color:#3d6eab;transform:scaleX(0.955);transform-origin:right center;right:258.90px;text-align:right;">-3,110</div>
<div class="t" style="top:343.39px;font-size:8.5px;line-height:10.20px;color:#3d6eab;transform:scaleX(0.97);transform-origin:left center;left:73.50px;">Accounts Payable</div>
<div class="t" style="top:355.86px;font-size:8.5px;line-height:10.20px;color:#3d6eab;transform:scaleX(0.97);transform-origin:left center;left:61.20px;">Corporate Tax Payable</div>
<div class="t" style="top:355.77px;font-size:8.6px;line-height:10.32px;color:#3d6eab;transform:scaleX(0.955);transform-origin:right center;right:759.70px;text-align:right;">-28,957</div>
<div class="t" style="top:355.77px;font-size:8.6px;line-height:10.32px;color:#3d6eab;transform:scaleX(0.955);transform-origin:right center;right:713.50px;text-align:right;">-29,531</div>
<div class="t" style="top:355.77px;font-size:8.6px;line-height:10.32px;color:#3d6eab;transform:scaleX(0.955);transform-origin:right center;right:668.20px;text-align:right;">-30,268</div>
<div class="t" style="top:355.77px;font-size:8.6px;line-height:10.32px;color:#3d6eab;transform:scaleX(0.955);transform-origin:right center;right:619.90px;text-align:right;">-30,938</div>
<div class="t" style="top:355.77px;font-size:8.6px;line-height:10.32px;color:#3d6eab;transform:scaleX(0.955);transform-origin:right center;right:574.40px;text-align:right;">-32,379</div>
<div class="t" style="top:355.77px;font-size:8.6px;line-height:10.32px;color:#3d6eab;transform:scaleX(0.955);transform-origin:right center;right:528.70px;text-align:right;">-33,583</div>
<div class="t" style="top:355.77px;font-size:8.6px;line-height:10.32px;color:#3d6eab;transform:scaleX(0.955);transform-origin:right center;right:484.70px;text-align:right;">-34,392</div>
<div class="t" style="top:355.77px;font-size:8.6px;line-height:10.32px;color:#3d6eab;transform:scaleX(0.955);transform-origin:right center;right:440.20px;text-align:right;">-35,488</div>
<div class="t" style="top:355.77px;font-size:8.6px;line-height:10.32px;color:#3d6eab;transform:scaleX(0.955);transform-origin:right center;right:395.20px;text-align:right;">-36,565</div>
<div class="t" style="top:355.77px;font-size:8.6px;line-height:10.32px;color:#3d6eab;transform:scaleX(0.955);transform-origin:right center;right:350.20px;text-align:right;">-38,650</div>
<div class="t" style="top:355.77px;font-size:8.6px;line-height:10.32px;color:#3d6eab;transform:scaleX(0.955);transform-origin:right center;right:305.70px;text-align:right;">-39,641</div>
<div class="t" style="top:355.77px;font-size:8.6px;line-height:10.32px;color:#3d6eab;transform:scaleX(0.955);transform-origin:right center;right:258.90px;text-align:right;">-37,561</div>
<div class="t" style="top:355.77px;font-size:8.6px;line-height:10.32px;color:#3d6eab;transform:scaleX(0.955);transform-origin:right center;right:214.00px;text-align:right;">-41,838</div>
<div class="t" style="top:355.77px;font-size:8.6px;line-height:10.32px;color:#3d6eab;transform:scaleX(0.955);transform-origin:right center;right:170.20px;text-align:right;">-42,454</div>
<div class="t" style="top:355.77px;font-size:8.6px;line-height:10.32px;color:#3d6eab;transform:scaleX(0.955);transform-origin:right center;right:124.40px;text-align:right;">-43,081</div>
<div class="t" style="top:368.33px;font-size:8.5px;line-height:10.20px;color:#ffffff;font-weight:bold;transform:scaleX(0.95);transform-origin:left center;left:61.20px;">Total Current Liabilities</div>
<div class="t" style="top:368.24px;font-size:8.6px;line-height:10.32px;color:#ffffff;transform:scaleX(0.955);transform-origin:right center;right:759.70px;text-align:right;">-32,067</div>
<div class="t" style="top:368.24px;font-size:8.6px;line-height:10.32px;color:#ffffff;transform:scaleX(0.955);transform-origin:right center;right:713.50px;text-align:right;">-32,641</div>
<div class="t" style="top:368.24px;font-size:8.6px;line-height:10.32px;color:#ffffff;transform:scaleX(0.955);transform-origin:right center;right:668.20px;text-align:right;">-33,378</div>
<div class="t" style="top:368.24px;font-size:8.6px;line-height:10.32px;color:#ffffff;transform:scaleX(0.955);transform-origin:right center;right:619.90px;text-align:right;">-34,048</div>
<div class="t" style="top:368.24px;font-size:8.6px;line-height:10.32px;color:#ffffff;transform:scaleX(0.955);transform-origin:right center;right:574.40px;text-align:right;">-35,489</div>
<div class="t" style="top:368.24px;font-size:8.6px;line-height:10.32px;color:#ffffff;transform:scaleX(0.955);transform-origin:right center;right:528.70px;text-align:right;">-36,693</div>
<div class="t" style="top:368.24px;font-size:8.6px;line-height:10.32px;color:#ffffff;transform:scaleX(0.955);transform-origin:right center;right:484.70px;text-align:right;">-37,502</div>
<div class="t" style="top:368.24px;font-size:8.6px;line-height:10.32px;color:#ffffff;transform:scaleX(0.955);transform-origin:right center;right:440.20px;text-align:right;">-38,598</div>
<div class="t" style="top:368.24px;font-size:8.6px;line-height:10.32px;color:#ffffff;transform:scaleX(0.955);transform-origin:right center;right:395.20px;text-align:right;">-39,675</div>
<div class="t" style="top:368.24px;font-size:8.6px;line-height:10.32px;color:#ffffff;transform:scaleX(0.955);transform-origin:right center;right:350.20px;text-align:right;">-41,760</div>
<div class="t" style="top:368.24px;font-size:8.6px;line-height:10.32px;color:#ffffff;transform:scaleX(0.955);transform-origin:right center;right:305.70px;text-align:right;">-42,751</div>
<div class="t" style="top:368.24px;font-size:8.6px;line-height:10.32px;color:#ffffff;transform:scaleX(0.955);transform-origin:right center;right:258.90px;text-align:right;">-40,671</div>
<div class="t" style="top:368.24px;font-size:8.6px;line-height:10.32px;color:#ffffff;transform:scaleX(0.955);transform-origin:right center;right:214.00px;text-align:right;">-41,838</div>
<div class="t" style="top:368.24px;font-size:8.6px;line-height:10.32px;color:#ffffff;transform:scaleX(0.955);transform-origin:right center;right:170.20px;text-align:right;">-42,454</div>
<div class="t" style="top:368.24px;font-size:8.6px;line-height:10.32px;color:#ffffff;transform:scaleX(0.955);transform-origin:right center;right:124.40px;text-align:right;">-43,081</div>
<div class="t" style="top:368.24px;font-size:8.6px;line-height:10.32px;color:#ffffff;transform:scaleX(0.955);transform-origin:right center;right:74.70px;text-align:right;">-445,270</div>
<div class="t" style="top:380.80px;font-size:8.5px;line-height:10.20px;color:#f4f7fc;font-weight:bold;transform:scaleX(0.95);transform-origin:left center;left:61.20px;">Non-Current Liabilities</div>
<div class="t" style="top:393.27px;font-size:8.5px;line-height:10.20px;color:#22589a;font-weight:bold;transform:scaleX(0.95);transform-origin:left center;left:61.20px;">Debt</div>
<div class="t" style="top:393.18px;font-size:8.6px;line-height:10.32px;color:#3d6eab;transform:scaleX(0.955);transform-origin:right center;right:759.70px;text-align:right;">-50,000</div>
<div class="t" style="top:393.18px;font-size:8.6px;line-height:10.32px;color:#3d6eab;transform:scaleX(0.955);transform-origin:right center;right:713.50px;text-align:right;">-49,250</div>
<div class="t" style="top:393.18px;font-size:8.6px;line-height:10.32px;color:#3d6eab;transform:scaleX(0.955);transform-origin:right center;right:668.20px;text-align:right;">-48,500</div>
<div class="t" style="top:393.18px;font-size:8.6px;line-height:10.32px;color:#3d6eab;transform:scaleX(0.955);transform-origin:right center;right:619.90px;text-align:right;">-47,750</div>
<div class="t" style="top:393.18px;font-size:8.6px;line-height:10.32px;color:#3d6eab;transform:scaleX(0.955);transform-origin:right center;right:574.40px;text-align:right;">-47,000</div>
<div class="t" style="top:393.18px;font-size:8.6px;line-height:10.32px;color:#3d6eab;transform:scaleX(0.955);transform-origin:right center;right:528.70px;text-align:right;">-46,250</div>
<div class="t" style="top:393.18px;font-size:8.6px;line-height:10.32px;color:#3d6eab;transform:scaleX(0.955);transform-origin:right center;right:484.70px;text-align:right;">-45,500</div>
<div class="t" style="top:393.18px;font-size:8.6px;line-height:10.32px;color:#3d6eab;transform:scaleX(0.955);transform-origin:right center;right:440.20px;text-align:right;">-44,750</div>
<div class="t" style="top:393.18px;font-size:8.6px;line-height:10.32px;color:#3d6eab;transform:scaleX(0.955);transform-origin:right center;right:395.20px;text-align:right;">-44,000</div>
<div class="t" style="top:393.18px;font-size:8.6px;line-height:10.32px;color:#3d6eab;transform:scaleX(0.955);transform-origin:right center;right:350.20px;text-align:right;">-43,250</div>
<div class="t" style="top:393.18px;font-size:8.6px;line-height:10.32px;color:#3d6eab;transform:scaleX(0.955);transform-origin:right center;right:305.70px;text-align:right;">-42,500</div>
<div class="t" style="top:393.18px;font-size:8.6px;line-height:10.32px;color:#3d6eab;transform:scaleX(0.955);transform-origin:right center;right:258.90px;text-align:right;">-41,750</div>
<div class="t" style="top:393.18px;font-size:8.6px;line-height:10.32px;color:#3d6eab;transform:scaleX(0.955);transform-origin:right center;right:214.00px;text-align:right;">-41,000</div>
<div class="t" style="top:393.18px;font-size:8.6px;line-height:10.32px;color:#3d6eab;transform:scaleX(0.955);transform-origin:right center;right:170.20px;text-align:right;">-40,250</div>
<div class="t" style="top:393.18px;font-size:8.6px;line-height:10.32px;color:#3d6eab;transform:scaleX(0.955);transform-origin:right center;right:124.40px;text-align:right;">-39,500</div>
<div class="t" style="top:393.18px;font-size:8.6px;line-height:10.32px;color:#3d6eab;transform:scaleX(0.955);transform-origin:right center;right:74.70px;text-align:right;">-550,500</div>
<div class="t" style="top:418.21px;font-size:8.5px;line-height:10.20px;color:#22589a;font-weight:bold;transform:scaleX(0.95);transform-origin:left center;left:61.20px;">Other Non-Current Liabilities</div>
<div class="t" style="top:430.68px;font-size:8.5px;line-height:10.20px;color:#3d6eab;transform:scaleX(0.97);transform-origin:left center;left:73.50px;">Placeholder</div>
<div class="t" style="top:443.15px;font-size:8.5px;line-height:10.20px;color:#22589a;font-weight:bold;transform:scaleX(0.95);transform-origin:left center;left:61.20px;">Total Non-Current Liabilities</div>
<div class="t" style="top:443.06px;font-size:8.6px;line-height:10.32px;color:#3d6eab;transform:scaleX(0.955);transform-origin:right center;right:759.70px;text-align:right;">-50,000</div>
<div class="t" style="top:443.06px;font-size:8.6px;line-height:10.32px;color:#3d6eab;transform:scaleX(0.955);transform-origin:right center;right:713.50px;text-align:right;">-49,250</div>
<div class="t" style="top:443.06px;font-size:8.6px;line-height:10.32px;color:#3d6eab;transform:scaleX(0.955);transform-origin:right center;right:668.20px;text-align:right;">-48,500</div>
<div class="t" style="top:443.06px;font-size:8.6px;line-height:10.32px;color:#3d6eab;transform:scaleX(0.955);transform-origin:right center;right:619.90px;text-align:right;">-47,750</div>
<div class="t" style="top:443.06px;font-size:8.6px;line-height:10.32px;color:#3d6eab;transform:scaleX(0.955);transform-origin:right center;right:574.40px;text-align:right;">-47,000</div>
<div class="t" style="top:443.06px;font-size:8.6px;line-height:10.32px;color:#3d6eab;transform:scaleX(0.955);transform-origin:right center;right:528.70px;text-align:right;">-46,250</div>
<div class="t" style="top:443.06px;font-size:8.6px;line-height:10.32px;color:#3d6eab;transform:scaleX(0.955);transform-origin:right center;right:484.70px;text-align:right;">-45,500</div>
<div class="t" style="top:443.06px;font-size:8.6px;line-height:10.32px;color:#3d6eab;transform:scaleX(0.955);transform-origin:right center;right:440.20px;text-align:right;">-44,750</div>
<div class="t" style="top:443.06px;font-size:8.6px;line-height:10.32px;color:#3d6eab;transform:scaleX(0.955);transform-origin:right center;right:395.20px;text-align:right;">-44,000</div>
<div class="t" style="top:443.06px;font-size:8.6px;line-height:10.32px;color:#3d6eab;transform:scaleX(0.955);transform-origin:right center;right:350.20px;text-align:right;">-43,250</div>
<div class="t" style="top:443.06px;font-size:8.6px;line-height:10.32px;color:#3d6eab;transform:scaleX(0.955);transform-origin:right center;right:305.70px;text-align:right;">-42,500</div>
<div class="t" style="top:443.06px;font-size:8.6px;line-height:10.32px;color:#3d6eab;transform:scaleX(0.955);transform-origin:right center;right:258.90px;text-align:right;">-41,750</div>
<div class="t" style="top:443.06px;font-size:8.6px;line-height:10.32px;color:#3d6eab;transform:scaleX(0.955);transform-origin:right center;right:214.00px;text-align:right;">-41,000</div>
<div class="t" style="top:443.06px;font-size:8.6px;line-height:10.32px;color:#3d6eab;transform:scaleX(0.955);transform-origin:right center;right:170.20px;text-align:right;">-40,250</div>
<div class="t" style="top:443.06px;font-size:8.6px;line-height:10.32px;color:#3d6eab;transform:scaleX(0.955);transform-origin:right center;right:124.40px;text-align:right;">-39,500</div>
<div class="t" style="top:455.62px;font-size:8.5px;line-height:10.20px;color:#22589a;font-weight:bold;transform:scaleX(0.95);transform-origin:left center;left:61.20px;">Total Liabilities</div>
<div class="t" style="top:455.53px;font-size:8.6px;line-height:10.32px;color:#3d6eab;transform:scaleX(0.955);transform-origin:right center;right:759.70px;text-align:right;">-78,957</div>
<div class="t" style="top:455.53px;font-size:8.6px;line-height:10.32px;color:#3d6eab;transform:scaleX(0.955);transform-origin:right center;right:713.50px;text-align:right;">-78,781</div>
<div class="t" style="top:455.53px;font-size:8.6px;line-height:10.32px;color:#3d6eab;transform:scaleX(0.955);transform-origin:right center;right:668.20px;text-align:right;">-78,768</div>
<div class="t" style="top:455.53px;font-size:8.6px;line-height:10.32px;color:#3d6eab;transform:scaleX(0.955);transform-origin:right center;right:619.90px;text-align:right;">-78,688</div>
<div class="t" style="top:455.53px;font-size:8.6px;line-height:10.32px;color:#3d6eab;transform:scaleX(0.955);transform-origin:right center;right:574.40px;text-align:right;">-79,379</div>
<div class="t" style="top:455.53px;font-size:8.6px;line-height:10.32px;color:#3d6eab;transform:scaleX(0.955);transform-origin:right center;right:528.70px;text-align:right;">-79,833</div>
<div class="t" style="top:455.53px;font-size:8.6px;line-height:10.32px;color:#3d6eab;transform:scaleX(0.955);transform-origin:right center;right:484.70px;text-align:right;">-79,892</div>
<div class="t" style="top:455.53px;font-size:8.6px;line-height:10.32px;color:#3d6eab;transform:scaleX(0.955);transform-origin:right center;right:440.20px;text-align:right;">-80,238</div>
<div class="t" style="top:455.53px;font-size:8.6px;line-height:10.32px;color:#3d6eab;transform:scaleX(0.955);transform-origin:right center;right:395.20px;text-align:right;">-80,565</div>
<div class="t" style="top:455.53px;font-size:8.6px;line-height:10.32px;color:#3d6eab;transform:scaleX(0.955);transform-origin:right center;right:350.20px;text-align:right;">-81,900</div>
<div class="t" style="top:455.53px;font-size:8.6px;line-height:10.32px;color:#3d6eab;transform:scaleX(0.955);transform-origin:right center;right:305.70px;text-align:right;">-82,141</div>
<div class="t" style="top:455.53px;font-size:8.6px;line-height:10.32px;color:#3d6eab;transform:scaleX(0.955);transform-origin:right center;right:258.90px;text-align:right;">-79,311</div>
<div class="t" style="top:455.53px;font-size:8.6px;line-height:10.32px;color:#3d6eab;transform:scaleX(0.955);transform-origin:right center;right:214.00px;text-align:right;">-82,838</div>
<div class="t" style="top:455.53px;font-size:8.6px;line-height:10.32px;color:#3d6eab;transform:scaleX(0.955);transform-origin:right center;right:170.20px;text-align:right;">-82,704</div>
<div class="t" style="top:455.53px;font-size:8.6px;line-height:10.32px;color:#3d6eab;transform:scaleX(0.955);transform-origin:right center;right:124.40px;text-align:right;">-82,581</div>
<div class="t" style="top:468.09px;font-size:8.5px;line-height:10.20px;color:#22589a;font-weight:bold;transform:scaleX(0.95);transform-origin:left center;left:61.20px;">Net Assets</div>
<div class="t" style="top:468.00px;font-size:8.6px;line-height:10.32px;color:#3d6eab;transform:scaleX(0.955);transform-origin:right center;right:759.70px;text-align:right;">112,562</div>
<div class="t" style="top:468.00px;font-size:8.6px;line-height:10.32px;color:#3d6eab;transform:scaleX(0.955);transform-origin:right center;right:713.50px;text-align:right;">255,952</div>
<div class="t" style="top:468.00px;font-size:8.6px;line-height:10.32px;color:#3d6eab;transform:scaleX(0.955);transform-origin:right center;right:668.20px;text-align:right;">402,277</div>
<div class="t" style="top:468.00px;font-size:8.6px;line-height:10.32px;color:#3d6eab;transform:scaleX(0.955);transform-origin:right center;right:619.90px;text-align:right;">551,499</div>
<div class="t" style="top:468.00px;font-size:8.6px;line-height:10.32px;color:#3d6eab;transform:scaleX(0.955);transform-origin:right center;right:574.40px;text-align:right;">705,865</div>
<div class="t" style="top:468.00px;font-size:8.6px;line-height:10.32px;color:#3d6eab;transform:scaleX(0.955);transform-origin:right center;right:528.70px;text-align:right;">865,433</div>
<div class="t" style="top:468.00px;font-size:8.6px;line-height:10.32px;color:#3d6eab;transform:scaleX(0.955);transform-origin:right center;right:484.70px;text-align:right;">1,028,782</div>
<div class="t" style="top:468.00px;font-size:8.6px;line-height:10.32px;color:#3d6eab;transform:scaleX(0.955);transform-origin:right center;right:440.20px;text-align:right;">1,196,378</div>
<div class="t" style="top:468.00px;font-size:8.6px;line-height:10.32px;color:#3d6eab;transform:scaleX(0.955);transform-origin:right center;right:395.20px;text-align:right;">1,368,452</div>
<div class="t" style="top:468.00px;font-size:8.6px;line-height:10.32px;color:#3d6eab;transform:scaleX(0.955);transform-origin:right center;right:350.20px;text-align:right;">1,548,007</div>
<div class="t" style="top:468.00px;font-size:8.6px;line-height:10.32px;color:#3d6eab;transform:scaleX(0.955);transform-origin:right center;right:305.70px;text-align:right;">1,732,770</div>
<div class="t" style="top:468.00px;font-size:8.6px;line-height:10.32px;color:#3d6eab;transform:scaleX(0.955);transform-origin:right center;right:258.90px;text-align:right;">1,912,434</div>
<div class="t" style="top:468.00px;font-size:8.6px;line-height:10.32px;color:#3d6eab;transform:scaleX(0.955);transform-origin:right center;right:214.00px;text-align:right;">2,112,329</div>
<div class="t" style="top:468.00px;font-size:8.6px;line-height:10.32px;color:#3d6eab;transform:scaleX(0.955);transform-origin:right center;right:170.20px;text-align:right;">2,318,500</div>
<div class="t" style="top:468.00px;font-size:8.6px;line-height:10.32px;color:#3d6eab;transform:scaleX(0.955);transform-origin:right center;right:124.40px;text-align:right;">2,527,317</div>
<div class="t" style="top:468.00px;font-size:8.6px;line-height:10.32px;color:#3d6eab;transform:scaleX(0.955);transform-origin:right center;right:74.70px;text-align:right;">11,680,411</div>
<div class="t" style="top:480.56px;font-size:8.5px;line-height:10.20px;color:#3d6eab;transform:scaleX(0.97);transform-origin:left center;left:73.50px;">Ordinary Equity</div>
<div class="t" style="top:493.03px;font-size:8.5px;line-height:10.20px;color:#3d6eab;transform:scaleX(0.97);transform-origin:left center;left:73.50px;">Retained Profits</div>
<div class="t" style="top:492.94px;font-size:8.6px;line-height:10.32px;color:#3d6eab;transform:scaleX(0.955);transform-origin:right center;right:759.70px;text-align:right;">112,562</div>
<div class="t" style="top:492.94px;font-size:8.6px;line-height:10.32px;color:#3d6eab;transform:scaleX(0.955);transform-origin:right center;right:713.50px;text-align:right;">255,952</div>
<div class="t" style="top:492.94px;font-size:8.6px;line-height:10.32px;color:#3d6eab;transform:scaleX(0.955);transform-origin:right center;right:668.20px;text-align:right;">402,277</div>
<div class="t" style="top:492.94px;font-size:8.6px;line-height:10.32px;color:#3d6eab;transform:scaleX(0.955);transform-origin:right center;right:619.90px;text-align:right;">551,499</div>
<div class="t" style="top:492.94px;font-size:8.6px;line-height:10.32px;color:#3d6eab;transform:scaleX(0.955);transform-origin:right center;right:574.40px;text-align:right;">705,865</div>
<div class="t" style="top:492.94px;font-size:8.6px;line-height:10.32px;color:#3d6eab;transform:scaleX(0.955);transform-origin:right center;right:528.70px;text-align:right;">865,433</div>
<div class="t" style="top:492.94px;font-size:8.6px;line-height:10.32px;color:#3d6eab;transform:scaleX(0.955);transform-origin:right center;right:484.70px;text-align:right;">1,028,782</div>
<div class="t" style="top:492.94px;font-size:8.6px;line-height:10.32px;color:#3d6eab;transform:scaleX(0.955);transform-origin:right center;right:440.20px;text-align:right;">1,196,378</div>
<div class="t" style="top:492.94px;font-size:8.6px;line-height:10.32px;color:#3d6eab;transform:scaleX(0.955);transform-origin:right center;right:395.20px;text-align:right;">1,368,452</div>
<div class="t" style="top:492.94px;font-size:8.6px;line-height:10.32px;color:#3d6eab;transform:scaleX(0.955);transform-origin:right center;right:350.20px;text-align:right;">1,548,007</div>
<div class="t" style="top:492.94px;font-size:8.6px;line-height:10.32px;color:#3d6eab;transform:scaleX(0.955);transform-origin:right center;right:305.70px;text-align:right;">1,732,770</div>
<div class="t" style="top:492.94px;font-size:8.6px;line-height:10.32px;color:#3d6eab;transform:scaleX(0.955);transform-origin:right center;right:258.90px;text-align:right;">1,912,434</div>
<div class="t" style="top:492.94px;font-size:8.6px;line-height:10.32px;color:#3d6eab;transform:scaleX(0.955);transform-origin:right center;right:214.00px;text-align:right;">2,112,329</div>
<div class="t" style="top:492.94px;font-size:8.6px;line-height:10.32px;color:#3d6eab;transform:scaleX(0.955);transform-origin:right center;right:170.20px;text-align:right;">2,318,500</div>
<div class="t" style="top:492.94px;font-size:8.6px;line-height:10.32px;color:#3d6eab;transform:scaleX(0.955);transform-origin:right center;right:124.40px;text-align:right;">2,527,317</div>
<div class="t" style="top:505.50px;font-size:8.5px;line-height:10.20px;color:#22589a;font-weight:bold;transform:scaleX(0.95);transform-origin:left center;left:73.50px;">Total Equity</div>
<div class="t" style="top:505.41px;font-size:8.6px;line-height:10.32px;color:#3d6eab;transform:scaleX(0.955);transform-origin:right center;right:759.70px;text-align:right;">112,562</div>
<div class="t" style="top:505.41px;font-size:8.6px;line-height:10.32px;color:#3d6eab;transform:scaleX(0.955);transform-origin:right center;right:713.50px;text-align:right;">255,952</div>
<div class="t" style="top:505.41px;font-size:8.6px;line-height:10.32px;color:#3d6eab;transform:scaleX(0.955);transform-origin:right center;right:668.20px;text-align:right;">402,277</div>
<div class="t" style="top:505.41px;font-size:8.6px;line-height:10.32px;color:#3d6eab;transform:scaleX(0.955);transform-origin:right center;right:619.90px;text-align:right;">551,499</div>
<div class="t" style="top:505.41px;font-size:8.6px;line-height:10.32px;color:#3d6eab;transform:scaleX(0.955);transform-origin:right center;right:574.40px;text-align:right;">705,865</div>
<div class="t" style="top:505.41px;font-size:8.6px;line-height:10.32px;color:#3d6eab;transform:scaleX(0.955);transform-origin:right center;right:528.70px;text-align:right;">865,433</div>
<div class="t" style="top:505.41px;font-size:8.6px;line-height:10.32px;color:#3d6eab;transform:scaleX(0.955);transform-origin:right center;right:484.70px;text-align:right;">1,028,782</div>
<div class="t" style="top:505.41px;font-size:8.6px;line-height:10.32px;color:#3d6eab;transform:scaleX(0.955);transform-origin:right center;right:440.20px;text-align:right;">1,196,378</div>
<div class="t" style="top:505.41px;font-size:8.6px;line-height:10.32px;color:#3d6eab;transform:scaleX(0.955);transform-origin:right center;right:395.20px;text-align:right;">1,368,452</div>
<div class="t" style="top:505.41px;font-size:8.6px;line-height:10.32px;color:#3d6eab;transform:scaleX(0.955);transform-origin:right center;right:350.20px;text-align:right;">1,548,007</div>
<div class="t" style="top:505.41px;font-size:8.6px;line-height:10.32px;color:#3d6eab;transform:scaleX(0.955);transform-origin:right center;right:305.70px;text-align:right;">1,732,770</div>
<div class="t" style="top:505.41px;font-size:8.6px;line-height:10.32px;color:#3d6eab;transform:scaleX(0.955);transform-origin:right center;right:258.90px;text-align:right;">1,912,434</div>
<div class="t" style="top:505.41px;font-size:8.6px;line-height:10.32px;color:#3d6eab;transform:scaleX(0.955);transform-origin:right center;right:214.00px;text-align:right;">2,112,329</div>
<div class="t" style="top:505.41px;font-size:8.6px;line-height:10.32px;color:#3d6eab;transform:scaleX(0.955);transform-origin:right center;right:170.20px;text-align:right;">2,318,500</div>
<div class="t" style="top:505.41px;font-size:8.6px;line-height:10.32px;color:#3d6eab;transform:scaleX(0.955);transform-origin:right center;right:124.40px;text-align:right;">2,527,317</div>
<div class="t" style="top:530.44px;font-size:8.5px;line-height:10.20px;color:#3d6eab;transform:scaleX(0.97);transform-origin:left center;left:73.50px;">Total Error Checks Result</div>
<div class="t" style="top:542.91px;font-size:8.5px;line-height:10.20px;color:#3d6eab;transform:scaleX(0.97);transform-origin:left center;left:73.50px;">Alert Check (Negative Cash)</div>
<div class="t" style="top:555.38px;font-size:8.5px;line-height:10.20px;color:#3d6eab;transform:scaleX(0.97);transform-origin:left center;left:73.50px;">Deviation</div>
<div class="b" style="left:199px;width:728.5px;top:478.0px;height:0;border-top:1px dotted #8a8a8a"></div>
<div class="b" style="left:242.5px;width:46.499999999999986px;top:391.4px;height:13.4px;border:1.3px solid #2b6b45"></div>
<div class="b" style="left:287.3px;top:402.9px;width:3.4px;height:3.4px;background:#1f4f33"></div>
<div class="b" style="left:337.5px;top:211.2px;width:2px;height:1.3px;background:#9a9a9a"></div>
<div class="b" style="left:429.5px;top:211.2px;width:2px;height:1.3px;background:#9a9a9a"></div>
<div class="b" style="left:790.5px;top:211.3px;width:2px;height:1.3px;background:#9a9a9a"></div>
<div class="b" style="left:834.5px;top:211.3px;width:2px;height:1.3px;background:#9a9a9a"></div>
<div class="b" style="left:384.5px;top:409.5px;width:2px;height:1px;background:#c4c4c4"></div>

<div id="vscroll"></div>
<svg class="abs" style="left:990.5px;top:53px" width="7" height="6" viewBox="0 0 7 6"><path d="M0.5 5.5 L3.5 0.5 L6.5 5.5 Z" fill="#5a5a5a"/></svg>
<div class="abs" style="left:992px;top:63px;width:5px;height:130px;background:#8a8a8a;border-radius:2.5px"></div>
<svg class="abs" style="left:990.5px;top:552px" width="7" height="6" viewBox="0 0 7 6"><path d="M0.5 0.5 L3.5 5.5 L6.5 0.5 Z" fill="#5a5a5a"/></svg>

<div id="tabbar"></div>
<svg class="abs" style="left:17px;top:565.5px" width="5" height="7" viewBox="0 0 5 7"><path d="M4 0.5 L1 3.5 L4 6.5" fill="none" stroke="#b0b0b0" stroke-width="1.1"/></svg>
<svg class="abs" style="left:37px;top:565.5px" width="5" height="7" viewBox="0 0 5 7"><path d="M1 0.5 L4 3.5 L1 6.5" fill="none" stroke="#555" stroke-width="1.1"/></svg>
<div class="tab" style="left:78px">How To</div>
<div class="tab ytab" style="left:122px;width:70.5px;text-align:center">2025 Accounts</div>
<div class="tab" style="left:204.8px">2025 MRR Dashboard</div>
<div class="tab ytab" style="left:304.8px;width:40px;text-align:center">IS 2025</div>
<div class="tab" style="left:356.8px">CF 2025</div>
<div class="abs" style="left:399.2px;top:559px;width:45.6px;height:19px;background:#fff"></div>
<div class="tab" style="left:399.2px;width:45.6px;text-align:center;color:#262626;font-weight:bold;top:559px;line-height:17px">BS 2025</div>
<div class="abs" style="left:405px;top:574px;width:34px;height:1.2px;background:#217346"></div>
<div class="tab" style="left:456.3px">Statements Summary 2025</div>
<div class="tab ytab" style="left:577px;width:71.4px;text-align:center">2026 Accounts</div>
<div class="tab" style="left:660px">2026 MRR Dashboard</div>
<div class="tab ytab" style="left:760.2px;width:40.3px;text-align:center">IS 2026</div>
<div class="tab" style="left:811.7px">CF 2026</div>
<div class="tab" style="left:861.4px;width:20.5px;overflow:hidden">BS 2026</div>
<svg class="abs" style="left:886px;top:567px" width="8" height="3" viewBox="0 0 8 3"><circle cx="1.2" cy="1.5" r="0.9" fill="#444"/><circle cx="4" cy="1.5" r="0.9" fill="#444"/><circle cx="6.8" cy="1.5" r="0.9" fill="#444"/></svg>
<svg class="abs" style="left:907px;top:565px" width="8" height="8" viewBox="0 0 8 8"><path d="M4 0 V8 M0 4 H8" stroke="#444" stroke-width="0.9"/></svg>
<svg class="abs" style="left:930.5px;top:564px" width="3" height="10" viewBox="0 0 3 10"><circle cx="1.5" cy="1.5" r="0.8" fill="#555"/><circle cx="1.5" cy="5" r="0.8" fill="#555"/><circle cx="1.5" cy="8.5" r="0.8" fill="#555"/></svg>
<svg class="abs" style="left:945px;top:566px" width="5" height="7" viewBox="0 0 5 7"><path d="M4.5 0 V7 L0 3.5 Z" fill="#555"/></svg>
<div class="abs" style="left:953.5px;top:566.5px;width:19.5px;height:6px;background:#646464;border-radius:3px"></div>
<svg class="abs" style="left:981px;top:566px" width="5" height="7" viewBox="0 0 5 7"><path d="M0 0 V7 L5 3.5 Z" fill="#555"/></svg>

<div id="status"></div>
<div class="st" style="left:8px;top:582px;font-size:7px;transform:scaleX(0.88);transform-origin:left center">Ready</div>
<svg class="abs" style="left:39.5px;top:582.5px" width="9" height="9" viewBox="0 0 9 9"><rect x="0.5" y="0.5" width="8" height="8" fill="none" stroke="#555" stroke-width="0.9"/><rect x="2" y="2" width="2" height="2" fill="#777"/><rect x="5" y="5" width="2" height="2" fill="#333"/><rect x="5" y="2" width="2" height="2" fill="#aaa"/><rect x="2" y="5" width="2" height="2" fill="#aaa"/></svg>
<svg class="abs" style="left:60px;top:581px" width="10" height="10" viewBox="0 0 10 10"><circle cx="5" cy="2" r="1.2" fill="none" stroke="#444" stroke-width="0.8"/><path d="M1 3.5 L9 3.5 M5 3.5 V6 L2.5 9.5 M5 6 L7.5 9.5" fill="none" stroke="#444" stroke-width="0.9"/></svg>
<div class="st" style="left:72px;top:582px;font-weight:bold;color:#333;font-size:7px;transform:scaleX(0.95);transform-origin:left center">Accessibility: Investigate</div>
<div class="abs" style="left:810px;top:580px;width:20px;height:11px;background:#e0e0e0"></div>
<svg class="abs" style="left:815px;top:583px" width="9" height="8" viewBox="0 0 9 8"><rect x="0.5" y="0.5" width="8" height="7" fill="none" stroke="#555" stroke-width="0.8"/><path d="M0.5 3 H8.5 M0.5 5.3 H8.5 M3.2 0.5 V7.5 M5.8 0.5 V7.5" stroke="#555" stroke-width="0.7"/></svg>
<svg class="abs" style="left:841px;top:583px" width="9" height="8" viewBox="0 0 9 8"><rect x="0.5" y="0.5" width="8" height="7" fill="none" stroke="#555" stroke-width="0.8"/><rect x="2.5" y="0.5" width="4" height="7" fill="#888"/></svg>
<svg class="abs" style="left:867px;top:583px" width="9" height="8" viewBox="0 0 9 8"><rect x="0.5" y="0.5" width="8" height="7" fill="none" stroke="#555" stroke-width="0.8"/><path d="M4.5 0.5 V4 M0.5 4 H8.5" stroke="#555" stroke-width="0.8"/></svg>
<div class="abs" style="left:889px;top:587px;width:4px;height:0.8px;background:#777"></div>
<div class="abs" style="left:895px;top:587px;width:67px;height:0.8px;background:#888"></div>
<div class="abs" style="left:928.5px;top:583.5px;width:2.5px;height:8px;background:#444"></div>
<svg class="abs" style="left:964.5px;top:584px" width="6" height="6" viewBox="0 0 6 6"><path d="M3 0 V6 M0 3 H6" stroke="#666" stroke-width="0.8"/></svg>
<div class="st" style="left:977.5px;top:583px;font-size:7px">100%</div>
</body></html>
